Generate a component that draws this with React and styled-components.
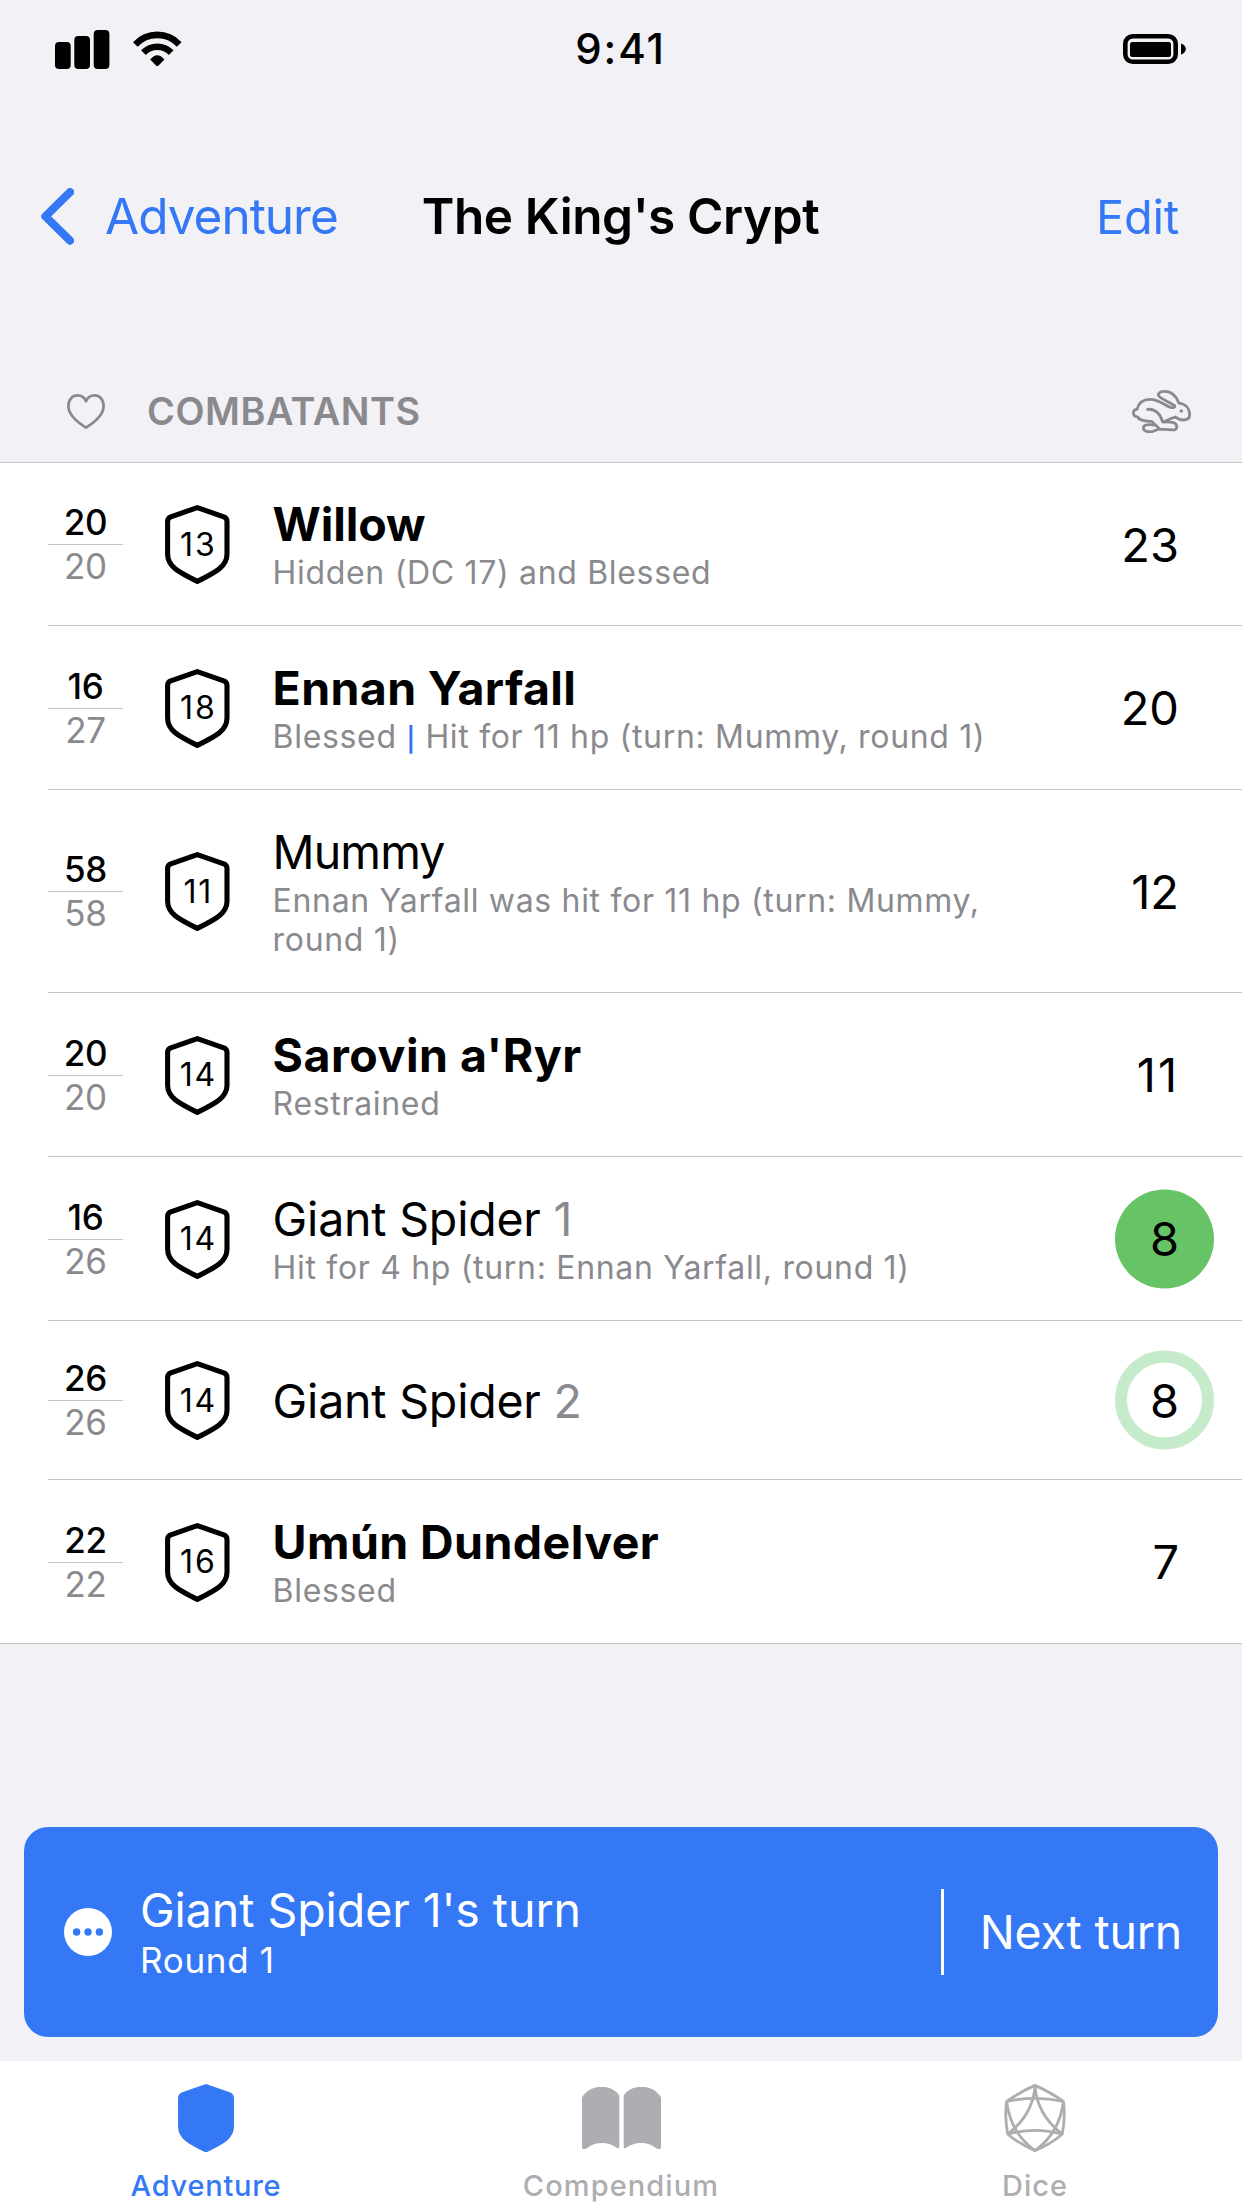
import React from "react";
import styled, { createGlobalStyle, css } from "styled-components";

const color = {
  page: "#f2f1f6",
  blue: "#3478f6",
  grey: "#8a8a8e",
  tabGrey: "#aeaeb2",
  line: "#c6c6c8",
  green: "#66c466",
  paleGreen: "#c6ebcb",
};

const GlobalStyle = createGlobalStyle`
  *, *::before { box-sizing: border-box; }
  body { margin: 0; background: ${color.page}; }
`;

const Screen = styled.div`
  display: flex;
  flex-direction: column;
  width: 1242px;
  height: 2208px;
  overflow: hidden;
  background: ${color.page};
  color: #000;
  font-family: Inter, "Liberation Sans", sans-serif;
  svg { display: block; flex: none; }
`;

const StatusBar = styled.header`
  display: grid;
  grid-template-columns: 1fr auto 1fr;
  align-items: center;
  height: 98px;
  padding: 0 56px 0 55px;
`;

const StatusIcons = styled.div`
  display: flex;
  align-items: center;
  gap: 23px;
  justify-self: ${(p) => (p.$end ? "end" : "start")};
`;

const Clock = styled.div`
  font-size: 42px;
  font-weight: 550;
  line-height: 50px;
  letter-spacing: 1.9px;
`;

const NavBar = styled.nav`
  display: grid;
  grid-template-columns: 1fr auto 1fr;
  align-items: center;
  height: 236px;
  padding: 0 63px 0 41px;
`;

const BackButton = styled.a`
  display: flex;
  align-items: center;
  gap: 31px;
  color: ${color.blue};
  font-size: 49.5px;
  line-height: 60px;
  letter-spacing: -1px;
`;

const NavTitle = styled.h1`
  margin: 0 0 0 21px;
  font-size: 49.5px;
  font-weight: 600;
  line-height: 60px;
  letter-spacing: -0.4px;
`;

const EditButton = styled.a`
  justify-self: end;
  padding-top: 2px;
  color: ${color.blue};
  font-size: 46.5px;
  line-height: 60px;
`;

const SectionHeader = styled.div`
  display: flex;
  align-items: center;
  height: 128px;
  padding: 27px 51px 0 67px;
  color: ${color.grey};
`;

const SectionTitle = styled.h2`
  flex: 1;
  margin: -1px 0 0 42px;
  font-size: 37.8px;
  font-weight: 600;
  line-height: 46px;
  letter-spacing: 0.55px;
`;

const List = styled.ul`
  margin: 0;
  padding: 0 0 0 48px;
  list-style: none;
  background: #fff;
  border: solid ${color.line};
  border-width: 1px 0;
`;

const Row = styled.li`
  display: flex;
  align-items: center;
  height: ${(p) => p.$height}px;
  padding-right: 62px;
  border-bottom: 1px solid ${color.line};
  &:last-child { border-bottom: 0; }
`;

const HitPoints = styled.div`
  width: 75px;
  margin-right: 42px;
  text-align: center;
  font-size: 35px;
  letter-spacing: -0.3px;
`;

const CurrentHp = styled.div`
  height: 44px;
  line-height: 44px;
  font-weight: 500;
`;

const MaxHp = styled.div`
  height: 44px;
  line-height: 43px;
  color: ${color.grey};
  border-top: 1px solid ${color.line};
`;

const ArmorClass = styled.div`
  display: grid;
  place-items: center;
  margin-right: 43px;
  padding-top: 1px;
  > * { grid-area: 1 / 1; }
`;

const ArmorValue = styled.span`
  padding-left: 2px;
  font-size: 32px;
  line-height: 40px;
  letter-spacing: 1.8px;
`;

const Details = styled.div`
  flex: 1;
  max-width: 760px;
`;

const Name = styled.div`
  font-size: 46.5px;
  font-weight: ${(p) => (p.$player ? 700 : 400)};
  line-height: 57px;
  letter-spacing: ${(p) => p.$tracking ?? (p.$player ? 0.42 : -0.2)}px;
  &:only-child { padding-top: 2px; }
`;

const Ordinal = styled.span`
  color: ${color.grey};
`;

const Note = styled.div`
  color: ${color.grey};
  font-size: 32px;
  line-height: 39px;
  letter-spacing: 0.68px;
`;

const Bar = styled.span`
  color: ${color.blue};
  font-size: 24px;
  font-weight: 600;
  line-height: 1;
`;

const marker = css`
  &::before {
    content: "";
    position: absolute;
    z-index: -1;
    left: 50%;
    top: 50%;
    width: 99px;
    height: 99px;
    transform: translate(-50px, -49.5px);
    border-radius: 50%;
    ${(p) =>
      p.$state === "active"
        ? `background: ${color.green};`
        : `border: 12px solid ${color.paleGreen};`}
  }
`;

const Initiative = styled.div`
  position: relative;
  z-index: 0;
  margin-left: auto;
  padding-right: 1px;
  font-size: 47px;
  line-height: 57px;
  letter-spacing: ${(p) => p.$tracking ?? 0}px;
  ${(p) => p.$state && marker}
`;

const TurnCard = styled.section`
  display: flex;
  align-items: center;
  height: 210px;
  margin: auto 24px 24px;
  padding: 0 36px 0 40px;
  border-radius: 24px;
  background: ${color.blue};
  color: #fff;
`;

const TurnText = styled.div`
  flex: 1;
  margin-left: 28px;
`;

const TurnTitle = styled.div`
  font-size: 46.5px;
  line-height: 57px;
  letter-spacing: -0.07px;
`;

const TurnRound = styled.div`
  margin-top: -1px;
  font-size: 35px;
  line-height: 44px;
  letter-spacing: 0.7px;
`;

const NextTurn = styled.a`
  display: flex;
  align-items: center;
  height: 86px;
  padding-left: 36px;
  border-left: 3px solid #fff;
  font-size: 46.5px;
  letter-spacing: -0.2px;
`;

const TabBar = styled.footer`
  display: grid;
  grid-template-columns: repeat(3, 1fr);
  height: 147px;
  background: #fff;
`;

const Tab = styled.a`
  display: flex;
  flex-direction: column;
  align-items: center;
  padding: 20px ${(p) => (p.$selected ? 2 : 0)}px 0 0;
  color: ${(p) => (p.$selected ? color.blue : color.tabGrey)};
`;

const TabIcon = styled.div`
  display: flex;
  align-items: center;
  height: 74px;
`;

const TabLabel = styled.div`
  margin-top: 13px;
  font-size: 29px;
  font-weight: 500;
  line-height: 36px;
  letter-spacing: ${(p) => p.$tracking}px;
`;

const SignalIcon = () => (
  <svg width="55" height="39" viewBox="0 0 55 39">
    <rect x="0" y="12" width="15.7" height="27" rx="4" />
    <rect x="19.3" y="6" width="15.7" height="33" rx="4" />
    <rect x="38.7" y="0" width="15.7" height="39" rx="4" />
  </svg>
);

const WifiIcon = () => (
  <svg width="49" height="36" viewBox="0 0 49 36">
    <g fill="none" stroke="#000" strokeWidth="6.6">
      <path d="M2.4 13.4A30 30 0 0 1 46.2 13.4" />
      <path d="M10.4 21.6A19.4 19.4 0 0 1 38.2 21.6" />
    </g>
    <path d="M17.2 28.6Q24.3 20 31.4 28.6L25.6 34.4Q24.3 35.6 23 34.4Z" />
  </svg>
);

const BatteryIcon = () => (
  <svg width="63" height="30" viewBox="0 0 63 30">
    <rect x="2.3" y="2.3" width="50.4" height="25.4" rx="7.5" fill="none" stroke="#000" strokeWidth="4.6" />
    <rect x="7" y="8" width="41" height="15" rx="2.5" />
    <path d="M58 9.5C61 10.5 62.8 12.8 62.8 15C62.8 17.4 61 19.6 58 20.6Z" />
  </svg>
);

const ChevronIcon = () => (
  <svg width="33" height="57" viewBox="0 0 33 57">
    <path d="M29 4.2L4.4 28.4L29 52.6" fill="none" stroke="currentColor" strokeWidth="8.2" strokeLinecap="round" strokeLinejoin="round" />
  </svg>
);

const HeartIcon = () => (
  <svg width="38" height="35" viewBox="0 0 38 35" fill="none" stroke="currentColor" strokeWidth="2.7" strokeLinejoin="round">
    <path d="M19 33.6C10 28 1.4 20.5 1.4 12C1.4 5.5 5.6 1.4 10.5 1.4C14.5 1.4 17.5 3.6 19 7.2C20.5 3.6 23.5 1.4 27.5 1.4C32.4 1.4 36.6 5.5 36.6 12C36.6 20.5 28 28 19 33.6Z" />
  </svg>
);

const RabbitIcon = () => (
  <svg width="59" height="43" viewBox="0 0 59 43" fill="none" stroke="currentColor" strokeWidth="2.8" strokeLinecap="round" strokeLinejoin="round">
    <path d="M5 19.3C7 11 13 9.3 18 9.3C27 9.3 33 15.5 38.5 17.4Q43 18.4 42.8 15.8L28.5 7.6C24 4.5 27 1.4 33 1.4C41 1.4 45 8 47 13.2C54 14 57.6 19 57.6 25C57.6 29 55 30 51 30C47.5 30 45.5 28.5 43.3 27C40 28 36 29.5 31.7 32C38 31.7 44.6 32 44.8 36.6C44.9 39.6 43 40 40 39.8C36 39 32 39.5 28 39.3L19.5 31.3C12 31.5 6.5 29.5 5.5 26.8C2 26.5 1.4 24.5 1.4 22.7C1.4 20.5 3 19.3 5 19.3Z" />
    <path d="M15.5 19.3C24 18.5 29 25 30.5 31.8" />
    <path d="M23 35C17 34.5 11.4 34 11.4 38C11.4 42 17 42 21 41.3L26.5 39.3" />
    <circle cx="49.3" cy="21" r="1.8" fill="currentColor" stroke="none" />
  </svg>
);

const ShieldIcon = ({ width, height, filled }) => (
  <svg width={width} height={height} viewBox="0 0 64.6 79">
    <path
      d="M32.3 2.6L58.8 11.8Q62 13 62 16.4V49C62 62 50 67.5 32.3 76.4C14.6 67.5 2.6 62 2.6 49V16.4Q2.6 13 5.8 11.8Z"
      fill={filled ? "currentColor" : "none"}
      stroke="currentColor"
      strokeWidth="5.1"
      strokeLinejoin="round"
    />
  </svg>
);

const BookIcon = () => (
  <svg width="79" height="63" viewBox="0 0 79 63" fill="currentColor">
    <path d="M0 10.5C8 -3.5 29.5 -3.5 37.3 8.5V59.5Q37.3 62.5 34.8 60.8C26.5 54.2 13 54.2 4.8 61.2Q0 64 0 60Z" />
    <path d="M79 10.5C71 -3.5 49.5 -3.5 41.7 8.5V59.5Q41.7 62.5 44.2 60.8C52.5 54.2 66 54.2 74.2 61.2Q79 64 79 60Z" />
  </svg>
);

const DiceIcon = () => (
  <svg width="62" height="68" viewBox="0 0 62 68" fill="none" stroke="currentColor" strokeWidth="2.8" strokeLinejoin="round">
    <path d="M31 1.4Q15 8.5 2.6 17.5Q0.4 33.5 3.8 50.2Q16 60.5 31 66.6Q46 60.5 58.2 50.2Q61.6 33.5 59.4 17.5Q47 8.5 31 1.4Z" />
    <path d="M2.6 17.5Q31 11.2 59.4 17.5" />
    <path d="M3.8 50.2Q31 42.4 58.2 50.2" />
    <path d="M31 1.4Q29.5 30 3.8 50.2" />
    <path d="M31 1.4Q32.5 30 58.2 50.2" />
    <path d="M2.6 17.5Q6.5 49 31 66.6" />
    <path d="M59.4 17.5Q55.5 49 31 66.6" />
  </svg>
);

const MoreIcon = () => (
  <svg width="48" height="48" viewBox="0 0 48 48">
    <circle cx="24" cy="24" r="24" fill="#fff" />
    <g fill={color.blue}>
      <circle cx="12.6" cy="24" r="3.7" />
      <circle cx="24" cy="24" r="3.7" />
      <circle cx="35.4" cy="24" r="3.7" />
    </g>
  </svg>
);

const combatants = [
  { hp: 20, max: 20, ac: 13, name: "Willow", tracking: -0.1, player: true, notes: ["Hidden (DC 17) and Blessed"], init: 23, height: 163 },
  { hp: 16, max: 27, ac: 18, name: "Ennan Yarfall", tracking: 0.35, player: true, notes: ["Blessed", "Hit for 11 hp (turn: Mummy, round 1)"], init: 20, height: 164 },
  { hp: 58, max: 58, ac: 11, name: "Mummy", tracking: -0.9, notes: ["Ennan Yarfall was hit for 11 hp (turn: Mummy, round 1)"], init: 12, height: 203 },
  { hp: 20, max: 20, ac: 14, name: "Sarovin a'Ryr", tracking: 0.5, player: true, notes: ["Restrained"], init: 11, initTracking: 2, height: 164 },
  { hp: 16, max: 26, ac: 14, name: "Giant Spider", ordinal: 1, notes: ["Hit for 4 hp (turn: Ennan Yarfall, round 1)"], init: 8, state: "active", height: 164 },
  { hp: 26, max: 26, ac: 14, name: "Giant Spider", ordinal: 2, notes: [], init: 8, state: "pending", height: 159 },
  { hp: 22, max: 22, ac: 16, name: "Umún Dundelver", player: true, notes: ["Blessed"], init: 7, height: 163 },
];

const Combatant = ({ data }) => (
  <Row $height={data.height}>
    <HitPoints>
      <CurrentHp>{data.hp}</CurrentHp>
      <MaxHp>{data.max}</MaxHp>
    </HitPoints>
    <ArmorClass>
      <ShieldIcon width={64.6} height={79} />
      <ArmorValue>{data.ac}</ArmorValue>
    </ArmorClass>
    <Details>
      <Name $player={data.player} $tracking={data.tracking}>
        {data.name}
        {data.ordinal && <Ordinal> {data.ordinal}</Ordinal>}
      </Name>
      {data.notes.length > 0 && (
        <Note>
          {data.notes.map((note, i) => (
            <React.Fragment key={note}>
              {i > 0 && <> <Bar>|</Bar> </>}
              {note}
            </React.Fragment>
          ))}
        </Note>
      )}
    </Details>
    <Initiative $state={data.state} $tracking={data.initTracking}>{data.init}</Initiative>
  </Row>
);

export default function App() {
  return (
    <Screen>
      <GlobalStyle />
      <StatusBar>
        <StatusIcons>
          <SignalIcon />
          <WifiIcon />
        </StatusIcons>
        <Clock>9:41</Clock>
        <StatusIcons $end>
          <BatteryIcon />
        </StatusIcons>
      </StatusBar>
      <NavBar>
        <BackButton>
          <ChevronIcon />
          Adventure
        </BackButton>
        <NavTitle>The King's Crypt</NavTitle>
        <EditButton>Edit</EditButton>
      </NavBar>
      <SectionHeader>
        <HeartIcon />
        <SectionTitle>COMBATANTS</SectionTitle>
        <RabbitIcon />
      </SectionHeader>
      <List>
        {combatants.map((c, i) => (
          <Combatant key={i} data={c} />
        ))}
      </List>
      <TurnCard>
        <MoreIcon />
        <TurnText>
          <TurnTitle>Giant Spider 1's turn</TurnTitle>
          <TurnRound>Round 1</TurnRound>
        </TurnText>
        <NextTurn>Next turn</NextTurn>
      </TurnCard>
      <TabBar>
        <Tab $selected>
          <TabIcon><ShieldIcon width={56} height={68.5} filled /></TabIcon>
          <TabLabel $tracking={0.75}>Adventure</TabLabel>
        </Tab>
        <Tab>
          <TabIcon><BookIcon /></TabIcon>
          <TabLabel $tracking={1.1}>Compendium</TabLabel>
        </Tab>
        <Tab>
          <TabIcon><DiceIcon /></TabIcon>
          <TabLabel $tracking={1}>Dice</TabLabel>
        </Tab>
      </TabBar>
    </Screen>
  );
}
